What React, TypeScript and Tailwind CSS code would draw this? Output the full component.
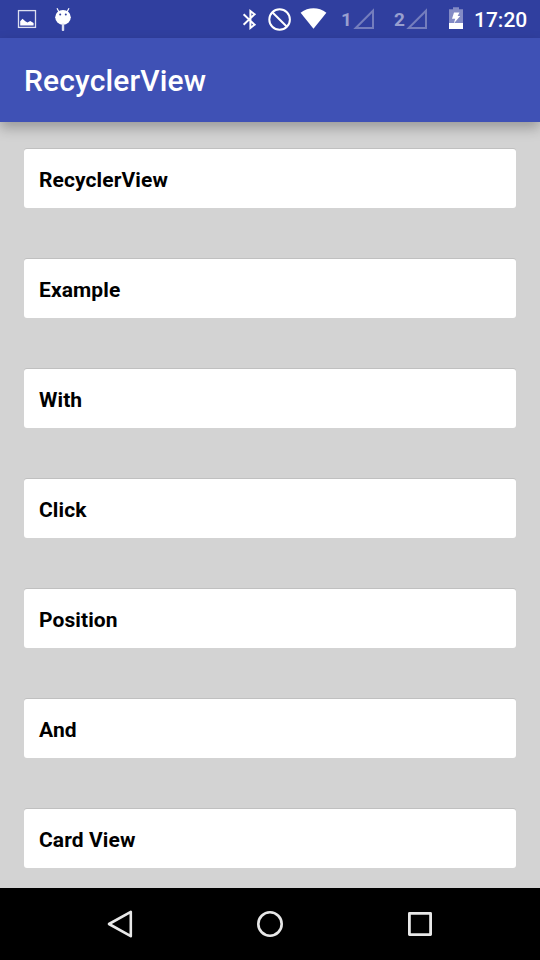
import React from "react";

const items = ["RecyclerView", "Example", "With", "Click", "Position", "And", "Card View"];

function PictureIcon() {
  return (
    <svg className="ml-[17px] h-[38px] w-5 shrink-0" viewBox="0 0 20 38" fill="none">
      <rect x="1.5" y="10.6" width="17" height="16.8" stroke="#dcdff0" strokeWidth="1.3" />
      <path d="M3.2 25.5V21.3L5.5 18.8L8.3 21.2L10.5 22.4L13.2 21L16.6 23V25.5Z" fill="#fff" />
    </svg>
  );
}

function DebugIcon() {
  return (
    <svg className="ml-[17px] h-[38px] w-[18px] shrink-0" viewBox="0 0 18 38">
      <path d="M3 8.3L5 12M15 8.3L13 12" stroke="#fff" strokeWidth="1.2" />
      <ellipse cx="9" cy="17.3" rx="7.8" ry="7.4" fill="#fff" />
      <rect x="7.8" y="23.5" width="2.4" height="7.5" rx="0.8" fill="#d9dcef" />
      <circle cx="6.2" cy="14.5" r="1" fill="#303f9f" />
      <circle cx="11.8" cy="14.5" r="1" fill="#303f9f" />
    </svg>
  );
}

function BluetoothIcon() {
  return (
    <svg className="h-[38px] w-[15px] shrink-0" viewBox="0 0 15 38" fill="none" stroke="#fff" strokeWidth="2">
      <path d="M1.6 14.2L12.6 24.7L8.4 28V11L12.6 14.3L1.6 24.8" />
    </svg>
  );
}

function BlockedIcon() {
  return (
    <svg className="ml-[11px] h-[38px] w-6 shrink-0" viewBox="0 0 24 38" fill="none" stroke="#fff" strokeWidth="2">
      <circle cx="11.6" cy="19.5" r="10.3" />
      <path d="M4.3 12.2L18.9 26.8" />
    </svg>
  );
}

function WifiIcon() {
  return (
    <svg className="ml-2 h-[38px] w-7 shrink-0" viewBox="0 0 28 38">
      <path d="M0.6 12.7C8.5 6.8 18.5 6.8 26.4 12.7L13.5 28.8Z" fill="#fff" />
    </svg>
  );
}

function SignalIcon() {
  return (
    <svg className="h-[38px] w-[22px] shrink-0" viewBox="0 0 22 38" fill="none">
      <path d="M2.7 28L20 10.7V28Z" stroke="#747dbd" strokeWidth="2" />
    </svg>
  );
}

function BatteryIcon() {
  return (
    <svg className="h-[38px] w-4 shrink-0" viewBox="0 0 16 38">
      <path d="M1 9.3H5V7.3H11V9.3H15V23H1Z" fill="#838bc5" />
      <path d="M1 23H15V29H1Z" fill="#fff" />
      <path d="M6 12.5H11.5L9.6 16H12.2L5.8 23.5L7.2 18.8H4Z" fill="#fff" />
    </svg>
  );
}

function StatusBar() {
  return (
    <div className="flex h-[38px] shrink-0 items-center bg-[#303f9f] text-white">
      <PictureIcon />
      <DebugIcon />
      <div className="ml-auto flex h-full items-center">
        <BluetoothIcon />
        <BlockedIcon />
        <WifiIcon />
        <span className="ml-[13px] w-[12px] pt-[1px] text-[19px] leading-none font-bold text-[#989fcf]">1</span>
        <SignalIcon />
        <span className="ml-[19px] w-[12px] pt-[1px] text-[19px] leading-none font-bold text-[#989fcf]">2</span>
        <SignalIcon />
        <span className="ml-5 flex">
          <BatteryIcon />
        </span>
        <span className="ml-[10px] w-[66px] pt-[2px] text-[21px] leading-none font-medium">17:20</span>
      </div>
    </div>
  );
}

function AppBar() {
  return (
    <header className="z-10 flex h-[84px] shrink-0 items-center bg-[#3f51b5] px-6 pt-[2px] shadow-[0_6px_12px_rgba(0,0,0,0.27)]">
      <h1 className="text-[30px] leading-none font-medium tracking-[0.15px] text-white">RecyclerView</h1>
    </header>
  );
}

function Card({ label }: { label: string }) {
  return (
    <li className="flex h-[59px] shrink-0 items-center rounded-[3px] bg-white px-[15px] pt-[5px] text-[21px] font-bold tracking-[0.1px] text-black shadow-[0_-1px_0_#c0c0c0]">
      {label}
    </li>
  );
}

function NavigationBar() {
  return (
    <nav className="z-10 flex h-[72px] shrink-0 items-center justify-center gap-[114px] bg-black">
      <svg className="size-9" viewBox="0 0 36 36" fill="none" stroke="#e8e8e8" strokeWidth="2.6" strokeLinejoin="round">
        <path d="M7 18L28.8 5.8V30.2Z" />
      </svg>
      <svg className="size-9" viewBox="0 0 36 36" fill="none" stroke="#e8e8e8" strokeWidth="2.6">
        <circle cx="18" cy="18" r="11.7" />
      </svg>
      <svg className="size-9" viewBox="0 0 36 36" fill="none" stroke="#e8e8e8" strokeWidth="2.8" strokeLinejoin="round">
        <rect x="7.4" y="7.4" width="21.2" height="21.2" />
      </svg>
    </nav>
  );
}

export default function App() {
  return (
    <div className="flex h-[960px] w-[540px] flex-col overflow-hidden bg-[#d3d3d3] font-[Roboto,sans-serif]">
      <StatusBar />
      <AppBar />
      <main className="min-h-0 flex-1 overflow-hidden px-6 pt-[27px]">
        <ul className="flex flex-col gap-[51px]">
          {items.map((label) => (
            <Card key={label} label={label} />
          ))}
        </ul>
      </main>
      <NavigationBar />
    </div>
  );
}
